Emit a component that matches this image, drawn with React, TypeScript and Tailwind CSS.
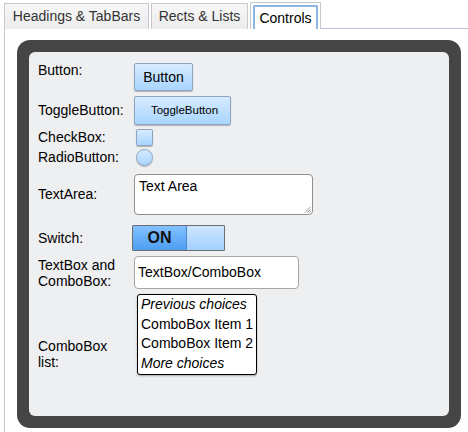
import React from "react";

const btnGrad = "bg-[linear-gradient(to_bottom,#d6ebff,#a9d5ff)] border border-[#8ea3c2] shadow-[0_1px_1px_rgba(0,0,0,0.25)]";

export default function App() {
  return (
    <div className="w-[468px] h-[432px] bg-white overflow-hidden flex flex-col" style={{ fontFamily: '"Liberation Sans", Arial, sans-serif' }}>
      {/* Tabs */}
      <div className="flex items-end h-[29px] pl-[4px] shrink-0">
        <div className="h-[26px] px-[6px] flex items-center border border-b-0 border-[#c6c9cf] bg-[linear-gradient(to_bottom,#f7f7f7,#ececec)] text-[14px] text-[#333] w-[145px] justify-center">Headings &amp; TabBars</div>
        <div className="ml-[2px] h-[26px] flex items-center justify-center border border-b-0 border-[#c6c9cf] bg-[linear-gradient(to_bottom,#f7f7f7,#ececec)] text-[14px] text-[#333] w-[97px]">Rects &amp; Lists</div>
        <div className="ml-[2px] h-[27px] w-[71px] border border-b-0 border-[#c6c9cf] bg-white p-[2px] pb-0">
          <div className="h-full border-2 border-b-0 border-[#8db5e6] rounded-t-[2px] flex items-center justify-center text-[14px] text-black">Controls</div>
        </div>
        <div className="flex-1 border-b border-[#b9c0cf] h-full" />
      </div>
      {/* Content */}
      <div className="flex-1 border-l border-[#c3c8d3] ml-[4px] pl-[12px] pt-[11px] pr-[7px] pb-[5px]">
        <div className="h-[388px] bg-[#454545] rounded-[13px] p-[12px]">
          <div className="h-full bg-[#eeeff1] rounded-[6px] pl-[9px] pt-[11px] text-[14px] text-black">
            {/* Button */}
            <div className="flex items-start h-[28px]">
              <div className="w-[96px] leading-[16px] -mt-[1px]">Button:</div>
              <div className={`w-[59px] h-[28px] rounded-[2px] flex items-center justify-center text-[14px] ${btnGrad}`}>Button</div>
            </div>
            {/* Toggle */}
            <div className="flex items-center h-[29px] mt-[5px]">
              <div className="w-[96px]">ToggleButton:</div>
              <div className={`w-[97px] h-[29px] rounded-[2px] flex items-center justify-center text-[11.5px] pl-[4px] ${btnGrad}`}>ToggleButton</div>
            </div>
            {/* Checkbox */}
            <div className="flex items-center h-[17px] mt-[4px]">
              <div className="w-[98px]">CheckBox:</div>
              <div className={`w-[17px] h-[17px] rounded-[2px] ${btnGrad}`} />
            </div>
            {/* Radio */}
            <div className="flex items-center h-[17px] mt-[3px]">
              <div className="w-[98px]">RadioButton:</div>
              <div className={`w-[17px] h-[17px] rounded-full ${btnGrad}`} />
            </div>
            {/* TextArea */}
            <div className="flex items-center h-[41px] mt-[8px]">
              <div className="w-[96px]">TextArea:</div>
              <div className="relative w-[179px] h-[41px] bg-white border border-[#8f8f8f] rounded-[4px] px-[4px] pt-[1px] text-[14px]">
                Text Area
                <svg className="absolute right-[1px] bottom-[1px]" width="7" height="7" viewBox="0 0 7 7">
                  <path d="M6.5 1 L1 6.5 M6.5 3.5 L3.5 6.5 M6.5 5.5 L5.5 6.5" stroke="#777" strokeWidth="0.8" />
                </svg>
              </div>
            </div>
            {/* Switch */}
            <div className="flex items-center h-[26px] mt-[10px]">
              <div className="w-[94px]">Switch:</div>
              <div className="w-[93px] h-[26px] border border-[#6b6f75] flex overflow-hidden rounded-[1px]">
                <div className="w-[54px] h-full bg-[linear-gradient(to_bottom,#82c1ff,#4d9ef2)] border-r border-[#4b87c9] flex items-center justify-center font-bold text-[16px] text-[#111]">ON</div>
                <div className="flex-1 h-full bg-[linear-gradient(to_bottom,#cde6ff,#a3d1ff)]" />
              </div>
            </div>
            {/* TextBox */}
            <div className="flex items-center h-[33px] mt-[5px]">
              <div className="w-[96px] leading-[16px]">TextBox and<br />ComboBox:</div>
              <div className="w-[165px] h-[33px] bg-white border border-[#a6a6a6] rounded-[4px] px-[3px] flex items-center text-[14px] whitespace-nowrap">TextBox/ComboBox</div>
            </div>
            {/* Combo list */}
            <div className="flex items-end mt-[5px]">
              <div className="w-[99px] leading-[16px] mb-[5px]">ComboBox<br />list:</div>
              <div className="w-[120px] h-[81px] bg-white border border-black rounded-[3px] shadow-[0_1px_2px_rgba(0,0,0,0.3)] px-[3px] text-[14px] leading-[19.7px] whitespace-nowrap overflow-hidden">
                <div className="italic">Previous choices</div>
                <div>ComboBox Item 1</div>
                <div>ComboBox Item 2</div>
                <div className="italic">More choices</div>
              </div>
            </div>
          </div>
        </div>
      </div>
    </div>
  );
}
